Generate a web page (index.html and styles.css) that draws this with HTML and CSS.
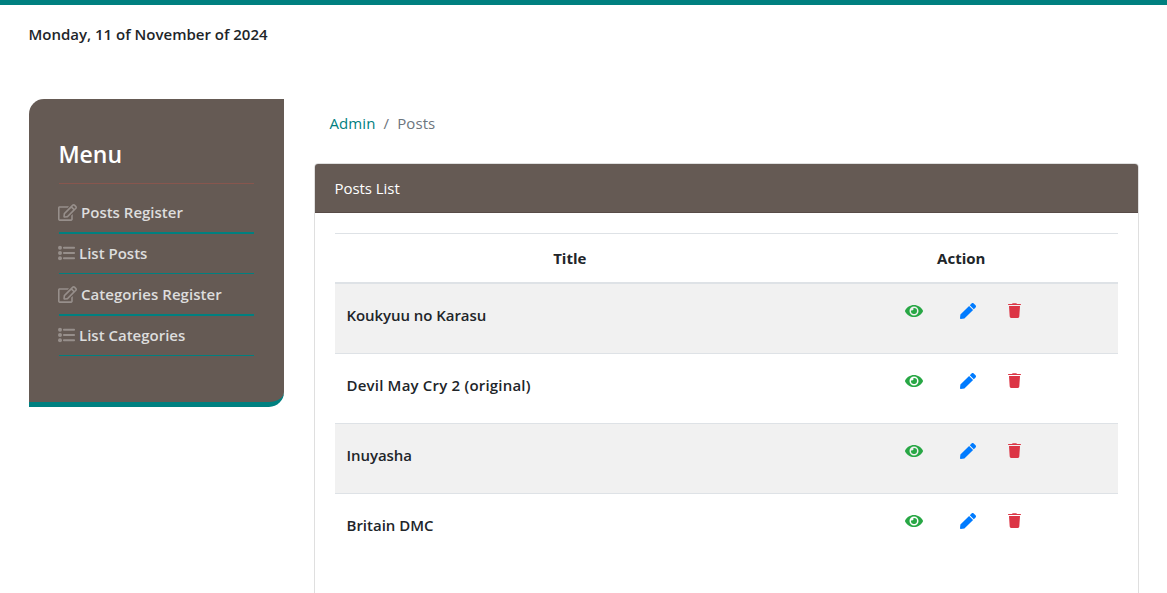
FILE: index.html
```html
<!DOCTYPE html>
<html lang="en">
<head>
<meta charset="utf-8">
<title>Posts</title>
<link rel="stylesheet" href="styles.css">
</head>
<body>
<svg class="sprite" aria-hidden="true">
  <symbol id="edit" viewBox="0 0 576 512"><path d="M402.3 344.9l32-32c5-5 13.700-1.500 13.700 5.700V464c0 26.500-21.500 48-48 48H48c-26.500 0-48-21.500-48-48V112c0-26.500 21.500-48 48-48h273.500c7.100 0 10.700 8.600 5.700 13.700l-32 32c-1.500 1.500-3.500 2.300-5.700 2.300H48v352h352V350.500c0-2.100.8-4.100 2.300-5.600zm156.600-201.800L296.300 405.700l-90.400 10c-26.200 2.900-48.500-19.200-45.600-45.600l10-90.400L432.900 17.100c22.900-22.900 59.900-22.900 82.700 0l43.200 43.200c22.900 22.900 22.900 60 .1 82.800zM460.100 174L402 115.900 216.200 301.800l-7.300 65.300 65.300-7.300L460.100 174zm64.800-79.700l-43.200-43.200c-4.100-4.100-10.800-4.100-14.800 0L436 82l58.100 58.100 30.900-30.900c4-4.200 4-10.800-.1-14.900z"/></symbol>
  <symbol id="list" viewBox="0 0 17 16"><circle cx="2" cy="2.700" r="2"/><circle cx="2" cy="8" r="2"/><circle cx="2" cy="13.300" r="2"/><rect x="5" y="1.700" width="12" height="2" rx=".8"/><rect x="5" y="7" width="12" height="2" rx=".8"/><rect x="5" y="12.300" width="12" height="2" rx=".8"/></symbol>
  <symbol id="eye" viewBox="0 0 576 512"><path d="M572.520 241.400C518.290 135.590 410.930 64 288 64S57.680 135.640 3.480 241.410a32.350 32.350 0 0 0 0 29.190C57.710 376.410 165.070 448 288 448s230.320-71.640 284.520-177.410a32.350 32.350 0 0 0 0-29.190zM288 400a144 144 0 1 1 144-144 143.930 143.930 0 0 1-144 144zm0-240a95.310 95.310 0 0 0-25.310 3.790 47.850 47.850 0 0 1-66.900 66.900A95.780 95.780 0 1 0 288 160z"/></symbol>
  <symbol id="pen" viewBox="0 0 512 512"><path d="M290.740 93.240l128.020 128.020-277.990 277.990-114.140 12.600C11.350 513.540-1.560 500.620.14 485.340l12.700-114.220 277.900-277.880zm207.200-19.060l-60.110-60.110c-18.750-18.750-49.160-18.750-67.910 0l-56.550 56.550 128.020 128.020 56.550-56.550c18.750-18.760 18.750-49.160 0-67.910z"/></symbol>
  <symbol id="trash" viewBox="0 0 13 15"><path d="M.5 1H4L4.700.2h3.600L9 1h3.500q.5 0 .5.500t-.5.500H.5Q0 2 0 1.500T.5 1zM1 3.100h11l-.7 10.400q-.1 1.400-1.400 1.400H3.100q-1.300 0-1.400-1.400z"/></symbol>
</svg>
<header class="topbar"><p class="date">Monday, 11 of November of 2024</p></header>
<div class="layout">
  <nav class="menu">
    <h2 class="menu-title">Menu</h2>
    <a class="menu-item"><svg class="icon-edit"><use href="#edit"/></svg><span>Posts Register</span></a>
    <a class="menu-item"><svg class="icon-list"><use href="#list"/></svg><span>List Posts</span></a>
    <a class="menu-item"><svg class="icon-edit"><use href="#edit"/></svg><span class="t-catreg">Categories Register</span></a>
    <a class="menu-item"><svg class="icon-list"><use href="#list"/></svg><span>List Categories</span></a>
  </nav>
  <main class="content">
    <div class="breadcrumb"><a class="crumb-link">Admin</a><span class="slash">/</span><span class="crumb-here">Posts</span></div>
    <section class="card">
      <div class="card-header"><span>Posts List</span></div>
      <div class="card-body">
        <div class="row head"><span>Title</span><span>Action</span></div>
        <div class="row shaded"><span class="post t-tight">Koukyuu no Karasu</span><div class="actions"><svg class="eye"><use href="#eye"/></svg><svg class="pen"><use href="#pen"/></svg><svg class="trash"><use href="#trash"/></svg></div></div>
        <div class="row"><span class="post t-wide">Devil May Cry 2 (original)</span><div class="actions"><svg class="eye"><use href="#eye"/></svg><svg class="pen"><use href="#pen"/></svg><svg class="trash"><use href="#trash"/></svg></div></div>
        <div class="row shaded"><span class="post t-tight">Inuyasha</span><div class="actions"><svg class="eye"><use href="#eye"/></svg><svg class="pen"><use href="#pen"/></svg><svg class="trash"><use href="#trash"/></svg></div></div>
        <div class="row"><span class="post">Britain DMC</span><div class="actions"><svg class="eye"><use href="#eye"/></svg><svg class="pen"><use href="#pen"/></svg><svg class="trash"><use href="#trash"/></svg></div></div>
      </div>
    </section>
  </main>
</div>
</body>
</html>
```
FILE: styles.css
```css
* { box-sizing: border-box; }
body { margin: 0; height: 593px; overflow: hidden; background: #fff; color: #212529; font: 15px/24px "Open Sans", "Noto Sans", sans-serif; border-top: 5px solid #008080; }
svg { fill: currentColor; flex: none; display: block; }
.sprite { display: none; }
.topbar { height: 94px; padding: 17px 28.500px; }
.date { margin: 0; font-weight: 600; font-size: 15px; white-space: nowrap; }
.layout { display: flex; gap: 30px; padding: 0 28px 0 29px; align-items: flex-start; }
.menu { width: 255px; height: 308px; padding: 38px 30px 0; background: #655a54; border-bottom: 5px solid #008080; border-radius: 15px 0; flex: none; }
.menu-title { margin: 0 0 8px; height: 47px; border-bottom: 1px solid #87564e; color: #fff; font-size: 23px; line-height: 34px; font-weight: 600; text-indent: -.6px; }
.menu-item { display: flex; height: 42px; align-items: center; border-bottom: 2px solid #008080; color: #ddd; font-weight: 600; font-size: 15px; white-space: nowrap; }
.menu-item:nth-of-type(even) { height: 40px; border-bottom-width: 1px; padding-bottom: 2px; }
.menu-item svg { color: #978f8b; margin-left: -1px; }
.icon-edit { width: 19px; height: 17px; margin-right: 4px; }
.icon-list { width: 17px; height: 16px; margin-right: 4px; }
.t-catreg { letter-spacing: .05px; }
.content { flex: 1; min-width: 0; }
.breadcrumb { height: 64px; padding: 12px 15.500px; display: flex; font-size: 15px; letter-spacing: .1px; }
.crumb-link { color: #008080; }
.slash { padding: 0 8px; color: #6c757d; }
.crumb-here { color: #6c757d; }
.card { height: 460px; border: 1px solid #dfdfdf; border-radius: 4px; overflow: hidden; }
.card-header { height: 49px; padding: 12px 19.500px; background: #655a54; border-bottom: 1px solid #574b47; color: #fff; letter-spacing: -.05px; }
.card-body { padding: 20px; }
.row { display: grid; grid-template-columns: 469.500px 1fr; height: 70px; border-top: 1px solid #dee2e6; }
.row.head { height: 51px; border-bottom: 2px solid #dee2e6; font-weight: 700; text-align: center; line-height: 49px; }
.row.head + .row { height: 69px; border-top: 0; }
.shaded { background: #f1f1f1; }
.post { padding: 19px 11.500px; font-weight: 600; }
.t-tight { letter-spacing: -.06px; }
.t-wide { letter-spacing: .2px; }
.actions { display: flex; height: 20px; margin-top: 17px; padding-left: 100.500px; align-items: center; }
.eye { width: 18px; height: 16px; color: #28a745; margin-right: 37px; }
.pen { width: 16px; height: 16px; color: #007bff; margin-right: 32px; }
.trash { width: 13px; height: 15px; color: #dc3545; margin-bottom: 1px; }
```
